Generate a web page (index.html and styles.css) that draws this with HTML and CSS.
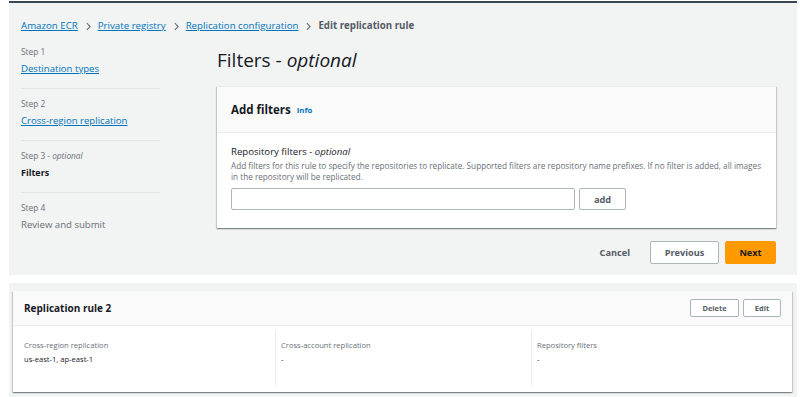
FILE: index.html
```html
<!DOCTYPE html>
<html lang="en">
  <head>
    <meta charset="UTF-8" />
    <meta name="viewport" content="width=device-width, initial-scale=1.0" />
    <title>Edit replication rule</title>
    <link rel="stylesheet" href="styles.css">
  </head>
  <body>
    <div class="page">
      <section class="wizard">
        <nav class="crumbs">
          <a href="#">Amazon ECR</a>
          <svg class="chev" viewBox="0 0 6 10"><path d="M1 1l4 4-4 4" /></svg>
          <a href="#">Private registry</a>
          <svg class="chev" viewBox="0 0 6 10"><path d="M1 1l4 4-4 4" /></svg>
          <a href="#">Replication configuration</a>
          <svg class="chev" viewBox="0 0 6 10"><path d="M1 1l4 4-4 4" /></svg>
          <span class="current">Edit replication rule</span>
        </nav>

        <div class="layout">
          <ol class="steps">
            <li class="step">
              <span class="step-label">Step 1</span>
              <a class="step-link" href="#">Destination types</a>
            </li>
            <li class="step">
              <span class="step-label">Step 2</span>
              <a class="step-link" href="#">Cross-region replication</a>
            </li>
            <li class="step">
              <span class="step-label">Step 3 - <i>optional</i></span>
              <span class="step-active">Filters</span>
            </li>
            <li class="step">
              <span class="step-label">Step 4</span>
              <span class="step-todo">Review and submit</span>
            </li>
          </ol>

          <main class="content">
            <h1>Filters - <i>optional</i></h1>
            <div class="card">
              <div class="card-head">
                <h2>Add filters</h2>
                <a class="info" href="#">Info</a>
              </div>
              <div class="card-body">
                <label class="field-label">Repository filters - <i>optional</i></label>
                <p class="hint">Add filters for this rule to specify the repositories to replicate. Supported filters are repository name prefixes. If no filter is added, all images in the repository will be replicated.</p>
                <div class="filter-row">
                  <input class="filter-input" type="text" />
                  <button class="btn btn-add">add</button>
                </div>
              </div>
            </div>
            <div class="actions">
              <button class="link-btn">Cancel</button>
              <button class="btn btn-prev">Previous</button>
              <button class="btn btn-next">Next</button>
            </div>
          </main>
        </div>
      </section>

      <section class="rules">
        <div class="rule-card">
          <div class="rule-head">
            <h3>Replication rule 2</h3>
            <div class="rule-buttons">
              <button class="btn btn-small btn-delete">Delete</button>
              <button class="btn btn-small btn-edit">Edit</button>
            </div>
          </div>
          <div class="rule-body">
            <div class="rule-col">
              <div class="rule-label">Cross-region replication</div>
              <div class="rule-value">us-east-1, ap-east-1</div>
            </div>
            <div class="rule-col">
              <div class="rule-label">Cross-account replication</div>
              <div class="rule-value">-</div>
            </div>
            <div class="rule-col">
              <div class="rule-label">Repository filters</div>
              <div class="rule-value">-</div>
            </div>
          </div>
        </div>
      </section>
    </div>
  </body>
</html>
```

FILE: styles.css
```css
body {
  margin: 0;
  background: #fff;
  font-family: "Open Sans", "Noto Sans", sans-serif;
  color: #16191f;
}

.page {
  width: 788px;
  margin-left: 9px;
  padding-top: 1px;
}

.wizard {
  height: 256px;
  border-top: 2px solid #3b4654;
  background: #f2f3f3;
  padding: 16px 21px 0 12px;
}

/* breadcrumbs */
.crumbs {
  display: flex;
  align-items: center;
  height: 14px;
  font-size: 9.7px;
  line-height: 14px;
}
.crumbs a {
  color: #0073bb;
  text-decoration: underline;
}
.chev {
  width: 5px;
  height: 9px;
  margin: 0 7px 0 8px;
  fill: none;
  stroke: #687078;
  stroke-width: 1.3;
}
.current {
  color: #545b64;
  font-weight: bold;
}

.layout {
  display: flex;
  margin-top: 13px;
}

/* steps */
.steps {
  list-style: none;
  margin: 0 57px 0 0;
  padding: 0;
  width: 139px;
}
.step {
  display: flex;
  flex-direction: column;
  padding: 9px 0 11px;
  border-bottom: 1px solid #dfe3e4;
}
.step:first-child {
  padding-top: 0;
}
.step:last-child {
  border-bottom: none;
}
.step-label {
  font-size: 8.3px;
  line-height: 12px;
  color: #687078;
}
.step-link,
.step-active,
.step-todo {
  margin-top: 3px;
  font-size: 9.6px;
  line-height: 16px;
}
.step-link {
  color: #0073bb;
  text-decoration: underline;
}
.step-active {
  font-weight: bold;
  font-size: 9px;
}
.step-todo {
  color: #687078;
}

/* main content */
.content {
  width: 559px;
}
.content h1 {
  margin: 1px 0 13px;
  font-size: 19px;
  line-height: 26px;
  font-weight: normal;
}

.card {
  background: #fff;
  box-shadow: 0 1px 1px 0 rgba(0, 28, 36, 0.3), 1px 1px 1px 0 rgba(0, 28, 36, 0.15),
    -1px 1px 1px 0 rgba(0, 28, 36, 0.15);
  border-top: 1px solid #eaeded;
}
.card-head {
  display: flex;
  align-items: center;
  height: 45px;
  padding: 0 14px;
  background: #fafafa;
  border-bottom: 1px solid #eaeded;
}
.card-head h2 {
  margin: 0;
  font-size: 11.5px;
  font-weight: bold;
}
.info {
  margin-left: 6px;
  margin-top: 1px;
  font-size: 7.8px;
  font-weight: bold;
  color: #0073bb;
  text-decoration: none;
}
.card-body {
  padding: 12px 14px 18px;
}
.field-label {
  display: block;
  font-size: 9.6px;
  line-height: 14px;
}
.hint {
  margin: 1px 0 0;
  font-size: 8.2px;
  line-height: 11px;
  color: #687078;
}
.filter-row {
  display: flex;
  gap: 4px;
  margin-top: 6px;
}
.filter-input {
  width: 344px;
  height: 22px;
  box-sizing: border-box;
  border: 1px solid #aab7b8;
  border-radius: 2px;
  margin: 0;
}

.btn {
  box-sizing: border-box;
  height: 22px;
  margin: 0;
  padding: 0;
  border: 1px solid #aab7b8;
  border-radius: 2px;
  background: #fff;
  color: #545b64;
  font-family: inherit;
  font-weight: bold;
  font-size: 9.2px;
}
.btn-add {
  width: 47px;
}

.actions {
  display: flex;
  align-items: center;
  justify-content: flex-end;
  margin-top: 13px;
}
.link-btn {
  border: none;
  background: none;
  padding: 0;
  margin-right: 20px;
  font-family: inherit;
  font-weight: bold;
  font-size: 9.2px;
  color: #545b64;
}
.btn-prev {
  width: 69px;
  height: 23px;
}
.btn-next {
  width: 51px;
  height: 23px;
  margin-left: 6px;
  background: #ff9900;
  border-color: #ff9900;
  color: #16191f;
}

/* rules list */
.rules {
  margin-top: 8px;
  background: #f2f3f3;
  padding: 8px 5px 5px 4px;
}
.rule-card {
  background: #fff;
  box-shadow: 0 1px 1px 0 rgba(0, 28, 36, 0.3), 1px 1px 1px 0 rgba(0, 28, 36, 0.15),
    -1px 1px 1px 0 rgba(0, 28, 36, 0.15);
}
.rule-head {
  display: flex;
  align-items: center;
  justify-content: space-between;
  height: 35px;
  padding: 0 11px;
  background: #fafafa;
  border-bottom: 1px solid #eaeded;
  box-sizing: border-box;
}
.rule-head h3 {
  margin: 0;
  font-size: 10px;
  font-weight: bold;
}
.rule-buttons {
  display: flex;
  gap: 4px;
}
.btn-small {
  height: 18px;
  font-size: 7.4px;
}
.btn-delete {
  width: 49px;
}
.btn-edit {
  width: 38px;
}
.rule-body {
  display: grid;
  grid-template-columns: 262px 256px 1fr;
  padding: 4px 0 7px;
}
.rule-col {
  height: 46px;
  padding: 9px 6px 0 5px;
  border-left: 1px solid #eaeded;
}
.rule-col:first-child {
  border-left: none;
  padding-left: 11px;
}
.rule-label {
  font-size: 7.6px;
  line-height: 12px;
  color: #687078;
}
.rule-value {
  margin-top: 2px;
  font-size: 7.6px;
  line-height: 12px;
}
```
